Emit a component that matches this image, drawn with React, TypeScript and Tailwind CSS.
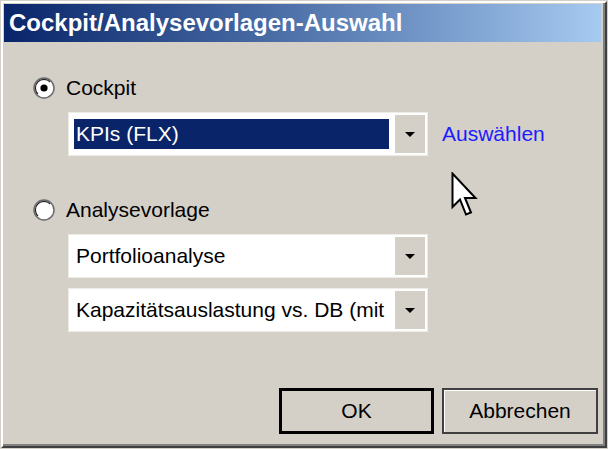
import React from "react";

const font = { fontFamily: '"Liberation Sans", Arial, sans-serif' };

function Radio({ checked }: { checked?: boolean }) {
  return (
    <svg width="22" height="22" viewBox="0 0 22 22" className="shrink-0">
      <circle cx="11" cy="11" r="10" fill="#fff" stroke="#6a6a6a" strokeWidth="1.5" />
      <circle cx="11" cy="11" r="8.6" fill="none" stroke="#202020" strokeWidth="1.2" strokeDasharray="27 27" transform="rotate(135 11 11)" />
      {checked && <circle cx="11" cy="11" r="3.6" fill="#000" />}
    </svg>
  );
}

function Arrow() {
  return (
    <svg width="12" height="7" viewBox="0 0 12 7">
      <path d="M1 1h10L6 6z" fill="#000" />
    </svg>
  );
}

function Combo({ value, selected }: { value: string; selected?: boolean }) {
  return (
    <div className="w-[360px] h-[44px] bg-white border border-[#ecebe6] flex items-stretch p-[2px]">
      <div className="flex-1 min-w-0 flex items-center pl-[3px] pr-[6px] py-[4px]">
        <div
          className={
            "w-full h-full flex items-center pl-[2px] whitespace-nowrap text-[21px] " +
            (selected ? "bg-[#0a246a] text-white" : "text-black")
          }
        >
          {value}
        </div>
      </div>
      <div className="w-[30px] bg-[#d4d0c8] flex items-center justify-center">
        <Arrow />
      </div>
    </div>
  );
}

export default function App() {
  return (
    <div className="w-[608px] h-[449px] bg-[#d4d0c8] p-[1px] relative" style={font}>
      <div className="h-full border-2 border-t-white border-l-white border-r-[#404040] border-b-[#404040] shadow-[inset_-2px_-2px_0_#808080] pt-[1px] pl-[1px] pr-[4px] pb-[4px] flex flex-col">
        <div className="h-[38px] shrink-0 bg-gradient-to-r from-[#0a246a] to-[#a6caf0] flex items-center pl-[5px]">
          <span className="text-white font-bold text-[24px] leading-none">
            Cockpit/Analysevorlagen-Auswahl
          </span>
        </div>

        <div className="flex items-center h-[24px] mt-[34px] pl-[29px] gap-[11px] text-[21px] text-black">
          <Radio checked />
          <span>Cockpit</span>
        </div>

        <div className="flex items-center mt-[12px] pl-[64px]">
          <Combo value="KPIs (FLX)" selected />
          <span className="ml-[14px] text-[21px] text-[#1c1cff]">Auswählen</span>
        </div>

        <div className="flex items-center h-[24px] mt-[42px] pl-[29px] gap-[11px] text-[21px] text-black">
          <Radio />
          <span>Analysevorlage</span>
        </div>

        <div className="mt-[12px] pl-[64px]">
          <Combo value="Portfolioanalyse" />
        </div>
        <div className="mt-[10px] pl-[64px]">
          <Combo value="Kapazitätsauslastung vs. DB (mit" />
        </div>

        <div className="mt-[56px] flex justify-end gap-[8px] pr-[3px]">
          <button className="w-[155px] h-[46px] border-[3px] border-black bg-[#d4d0c8] text-[21px] text-black">
            OK
          </button>
          <button className="w-[156px] h-[46px] border-2 border-[#404040] shadow-[inset_1px_1px_0_#ffffff] bg-[#d4d0c8] text-[21px] text-black">
            Abbrechen
          </button>
        </div>
      </div>

      <svg
        className="absolute left-[451px] top-[172px]"
        width="28"
        height="46"
        viewBox="0 0 28 46"
      >
        <path
          d="M1.5 1.5 L1.5 35 L9 27.5 L15 42.5 L20 40.5 L14 26 L24.5 26 Z"
          fill="#fff"
          stroke="#000"
          strokeWidth="2"
        />
      </svg>
    </div>
  );
}
